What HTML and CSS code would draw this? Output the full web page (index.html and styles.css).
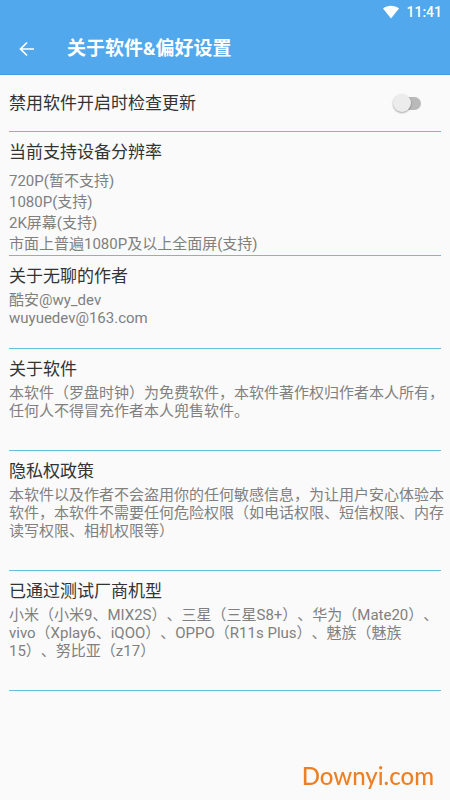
FILE: index.html
```html
<!DOCTYPE html>
<html lang="zh-CN">
<head>
<meta charset="utf-8">
<meta name="viewport" content="width=device-width, initial-scale=1">
<title>关于软件&amp;偏好设置</title>
<link rel="stylesheet" href="styles.css">
</head>
<body>
<header class="app-header">
  <div class="status-bar">
    <svg class="wifi" viewBox="0 0 18 14" aria-hidden="true"><path d="M9 13.500 1 3.600C3.200 1.800 6 .8 9 .8s5.800 1 8 2.800z" fill="#fff"/></svg>
    <span>11:41</span>
  </div>
  <div class="toolbar">
    <button class="back" type="button" aria-label="返回">
      <svg viewBox="0 0 16 16" aria-hidden="true"><path d="M15 8H2M8 1.500 1.500 8 8 14.500" fill="none" stroke="#fff" stroke-width="1.700"/></svg>
    </button>
    <h1 class="toolbar-title">关于软件&amp;偏好设置</h1>
  </div>
</header>
<main class="settings">
  <div class="switch-row">
    <label class="heading" for="no-update">禁用软件开启时检查更新</label>
    <input class="switch" type="checkbox" id="no-update">
  </div>
  <section class="section section-list">
    <h2 class="heading">当前支持设备分辨率</h2>
    <ul class="resolutions">
      <li>720P(暂不支持)</li>
      <li>1080P(支持)</li>
      <li>2K屏幕(支持)</li>
      <li>市面上普遍1080P及以上全面屏(支持)</li>
    </ul>
  </section>
  <section class="section section-author">
    <h2 class="heading">关于无聊的作者</h2>
    <p class="text">酷安@wy_dev<br>wuyuedev@163.com</p>
  </section>
  <section class="section">
    <h2 class="heading">关于软件</h2>
    <p class="text">本软件（罗盘时钟）为免费软件，本软件著作权归作者本人所有，任何人不得冒充作者本人兜售软件。</p>
  </section>
  <section class="section">
    <h2 class="heading">隐私权政策</h2>
    <p class="text">本软件以及作者不会盗用你的任何敏感信息，为让用户安心体验本软件，本软件不需要任何危险权限（如电话权限、短信权限、内存读写权限、相机权限等）</p>
  </section>
  <section class="section">
    <h2 class="heading">已通过测试厂商机型</h2>
    <p class="text">小米（小米9、MIX2S）、三星（三星S8+）、华为（Mate20）、vivo（Xplay6、iQOO）、OPPO（R11s Plus）、魅族（魅族15）、努比亚（z17）</p>
  </section>
</main>
<div class="watermark">Downyi.com</div>
</body>
</html>
```
FILE: styles.css
```css
* {
  box-sizing: border-box;
}

body {
  margin: 0;
  min-height: 100vh;
  background: #fafafa;
  color: #333;
  font-family: Roboto, "Noto Sans CJK SC", sans-serif;
  text-spacing-trim: space-all;
}

h1, h2, p, ul {
  margin: 0;
  padding: 0;
}

.app-header {
  background: #51a8ed;
  color: #fff;
  border-bottom: 1px solid #4a9bdc;
}

.status-bar {
  display: flex;
  align-items: center;
  justify-content: flex-end;
  gap: 6px;
  height: 24px;
  padding: 0 8px;
  font-size: 14px;
  font-weight: 500;
}

.wifi {
  width: 18px;
  height: 14px;
}

.toolbar {
  display: flex;
  align-items: center;
  gap: 32px;
  height: 50px;
  padding: 0 19px;
}

.back {
  display: flex;
  padding: 0;
  border: 0;
  background: none;
}

.back svg {
  width: 16px;
  height: 16px;
}

.toolbar-title {
  font-size: 19px;
  line-height: 24px;
  font-weight: 700;
}

.settings {
  padding: 0 9px;
}

.switch-row {
  display: flex;
  align-items: center;
  justify-content: space-between;
  height: 57px;
  padding-right: 20px;
  border-bottom: 1px solid #68bfdc;
}

.heading {
  font-size: 17px;
  line-height: 24px;
  font-weight: 400;
}

.switch {
  appearance: none;
  position: relative;
  width: 26px;
  height: 13px;
  margin: 0;
  border-radius: 7px;
  background: #b9b9b9;
}

.switch::before {
  content: "";
  position: absolute;
  left: -2px;
  top: -3px;
  width: 18px;
  height: 18px;
  border-radius: 50%;
  background: #ececec;
  box-shadow: 0 1px 2px rgba(0, 0, 0, 0.35);
}

.switch:checked::before {
  left: 10px;
}

.section {
  padding: 8px 0 30px;
  border-bottom: 1px solid #68bfdc;
}

.section-list {
  padding-bottom: 0;
}

.section-author {
  padding-bottom: 21px;
}

.resolutions {
  margin-top: 7px;
  list-style: none;
  color: #808080;
  font-size: 15px;
  line-height: 21px;
}

.text {
  margin: 3px -5px 0 0;
  color: #808080;
  font-size: 15px;
  line-height: 18px;
}

.watermark {
  position: fixed;
  right: 16px;
  bottom: 9px;
  color: #ee7f22;
  font-family: Lato, sans-serif;
  font-size: 24px;
  font-weight: 500;
  line-height: 30px;
}
```
